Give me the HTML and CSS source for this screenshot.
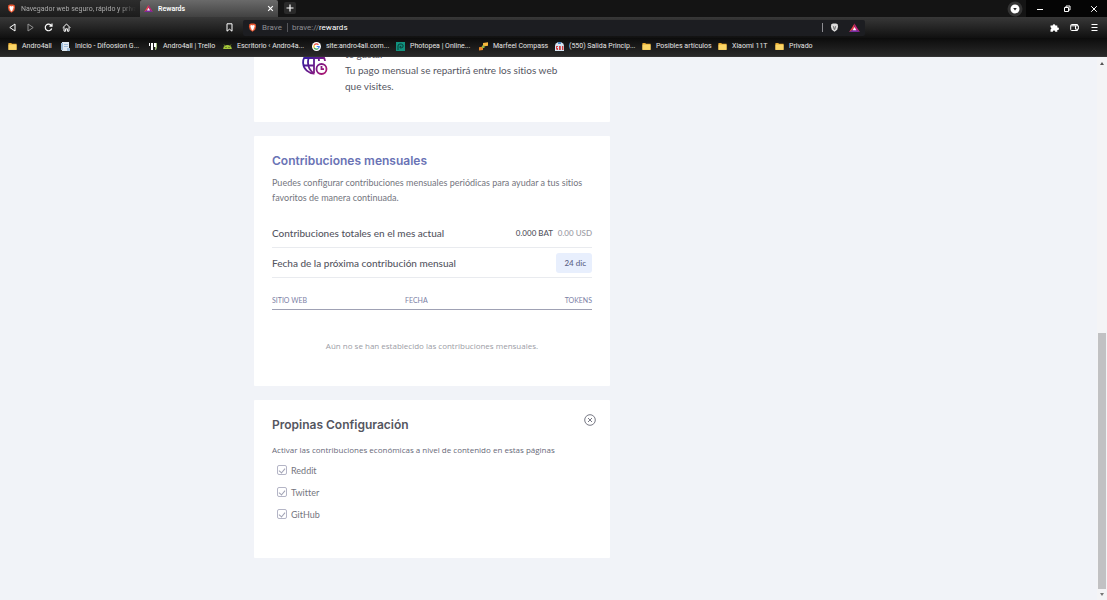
FILE: index.html
```html
<!DOCTYPE html>
<html lang="es">
<head>
<meta charset="utf-8">
<title>Rewards</title>
<link rel="stylesheet" href="styles.css">
</head>
<body>
<svg class="defs" width="0" height="0" aria-hidden="true">
  <defs>
    <linearGradient id="warm" gradientUnits="userSpaceOnUse" x1="2" y1="2" x2="26" y2="24"><stop offset="0.2" stop-color="#3b1c9c"/><stop offset="1" stop-color="#b5176f"/></linearGradient>
    <symbol id="lion" viewBox="0 0 10 10"><path fill="#e8552f" d="M3 .5h4l1 1 .9.2-.2 1.400.3.800-1 3.500L5 9.800 2 7.400 1 3.900l.3-.8-.2-1.400.9-.2z"/><path fill="#fff" d="M5 2.800l1-.6 1.600.8-.7 2 .2.9-1.300.8.500.8L5 8.200l-1.300-.700.500-.8-1.300-.8.200-.9-.7-2L4 2.200z"/></symbol>
    <symbol id="bat" viewBox="0 0 12 11"><path fill="#e4454a" d="M6 .5L3 5.500 0 10l6-3z"/><path fill="#c21f7b" d="M6 .5l3 5 3 4.500-6-3z"/><path fill="#7a2a9c" d="M0 10l6-4 6 4z"/><path fill="#fff" d="M6 4.500L8 8H4z"/></symbol>
    <symbol id="folder" viewBox="0 0 10 8"><path fill="#e9a92e" d="M.5 0h3l1 1h5v6.500H.5z"/><path fill="#fbd667" d="M.5 1.800h9v6H.5z"/></symbol>
  </defs>
</svg>
<header class="browser">
  <div class="tabs">
    <button class="tab"><svg class="i9"><use href="#lion"/></svg><span class="tab-title">Navegador web seguro, rápido y priva</span></button>
    <button class="tab tab-active"><svg class="i9"><use href="#bat"/></svg><span class="tab-title">Rewards</span><svg class="i6" viewBox="0 0 6 6"><path class="thin" d="M1 1l4 4M5 1L1 5"/></svg></button>
    <button class="new-tab" aria-label="Nueva pestaña"><svg class="i8" viewBox="0 0 8 8"><path class="line" d="M4 .5v7M.5 4h7"/></svg></button>
    <span class="spacer"></span>
    <button class="profile" aria-label="Perfil"><svg viewBox="0 0 16 16"><circle cx="8" cy="8" r="7.500" fill="#333"/><circle cx="8" cy="8" r="4.500" fill="#fff"/><path d="M6.200 7h3.600L8 9.400z" fill="#222"/></svg></button>
    <button class="win" aria-label="Minimizar"><svg class="i8" viewBox="0 0 8 8"><path class="thin" d="M1 4.500h6"/></svg></button>
    <button class="win" aria-label="Restaurar"><svg class="i8" viewBox="0 0 8 8"><path class="thin" d="M1.500 2.500h4v4h-4zM3 2.500V1h4v4H5.500"/></svg></button>
    <button class="win" aria-label="Cerrar"><svg class="i8" viewBox="0 0 8 8"><path class="thin" d="M1.200 1.200l5.600 5.600M6.800 1.200L1.200 6.800"/></svg></button>
  </div>
  <div class="toolbar">
    <div class="nav">
      <button class="tool" aria-label="Atrás"><svg class="i9" viewBox="0 0 9 9"><path class="thin" d="M7 1v7L1.800 4.500z"/></svg></button>
      <button class="tool dim" aria-label="Adelante"><svg class="i9" viewBox="0 0 9 9"><path class="thin" d="M2 1v7l5.200-3.500z"/></svg></button>
      <button class="tool" aria-label="Recargar"><svg class="i9" viewBox="0 0 9 9"><path class="line" d="M7.300 2.600A3.300 3.300 0 1 0 7.700 5.500M8 .6v2.600H5.400"/></svg></button>
      <button class="tool" aria-label="Inicio"><svg class="i9" viewBox="0 0 9 9"><path class="thin" d="M.7 4.800L4.500 1l3.800 3.800M2 4.200v4h1.600V5.800h1.800v2.400H7v-4"/></svg></button>
    </div>
    <button class="tool mark" aria-label="Marcador"><svg class="i9" viewBox="0 0 9 9"><path class="thin" d="M2 .8h5v7.400L4.500 6.200 2 8.200z"/></svg></button>
    <div class="address">
      <svg class="i9"><use href="#lion"/></svg>
      <span class="site">Brave</span>
      <label class="scheme" for="url">brave://</label>
      <input id="url" class="url" type="text" value="rewards">
      <button class="shield" aria-label="Escudos"><svg class="i9" viewBox="0 0 10 10"><path fill="#ddd" d="M3 .5h4l1 1 .9.2-.2 1.400.3.800-1 3.500L5 9.800 2 7.400 1 3.900l.3-.8-.2-1.400.9-.2z"/><path fill="#777" d="M3 3l1.500 1L5 6l.5-2L7 3 6 7 5 8 4 7z"/></svg></button>
      <button class="tool" aria-label="Rewards"><svg class="i11"><use href="#bat"/></svg></button>
    </div>
    <span class="spacer"></span>
    <div class="nav nav-end">
      <button class="tool" aria-label="Extensiones"><svg class="i9" viewBox="0 0 9 9"><path fill="#fff" d="M.5 2.500h2.200a1.300 1.300 0 1 1 2.600 0h2v2a1.300 1.300 0 1 1 0 2.500v1.800H5.200a1.200 1.200 0 0 0-2.400 0H.5V6.500a1.200 1.200 0 0 0 0-2.300z"/></svg></button>
      <button class="tool" aria-label="Cartera"><svg class="i9" viewBox="0 0 9 9"><path class="thin" d="M7.500 2.800V1.500H1.600Q.7 1.500.7 2.400v4.200q0 .9.900.9h5.900V6.200M.9 2.800h7.500v3.400H5.500V2.800"/></svg></button>
      <button class="tool" aria-label="Menú"><svg class="i9" viewBox="0 0 9 9"><path class="thin" d="M1.500 1.500h6M1.500 4.500h6M1.500 7.500h6"/></svg></button>
    </div>
  </div>
  <nav class="bookmarks">
    <a class="bm" href="#"><svg class="i9"><use href="#folder"/></svg>Andro4all</a>
    <a class="bm" href="#"><svg class="i9" viewBox="0 0 9 9"><path fill="#dfe8f2" d="M1 0h7v9H1z"/><path fill="#9dbbd8" d="M0 1h2v7H0zM3 2h4v1H3zM3 4h4v1H3zM6 6h3v3H6z"/></svg>Inicio - Difoosion G...</a>
    <a class="bm" href="#"><svg class="i9" viewBox="0 0 9 9"><path fill="#fff" d="M0 1h1v3H0zM2 1h2v7H2zM5 1h2v4H5z"/><path fill="#9fbb7a" d="M7 1h1v4.500L7 8H6V5h1z"/></svg>Andro4all | Trello</a>
    <a class="bm" href="#"><svg class="i9" viewBox="0 0 9 9"><path fill="#a4c639" d="M.2 7a4.300 4 0 0 1 8.600 0z"/><path stroke="#a4c639" stroke-width=".6" d="M2 4L1 2.500M7 4l1-1.500"/><path fill="#222" d="M2.500 5.200h1v.8h-1zM5.500 5.200h1v.8h-1z"/></svg>Escritorio ‹ Andro4a...</a>
    <a class="bm" href="#"><svg class="i9" viewBox="0 0 10 10"><circle cx="5" cy="5" r="5" fill="#fff"/><g fill="none" stroke-width="1.300"><path stroke="#ea4335" d="M2.500 3.600A3 3 0 0 1 7.200 3"/><path stroke="#fbbc05" d="M2.500 3.600a3 3 0 0 0 0 2.900"/><path stroke="#34a853" d="M2.500 6.500A3 3 0 0 0 7 7.200"/><path stroke="#4285f4" d="M7 7.200A3 3 0 0 0 8 5H5.200"/></g></svg>site:andro4all.com...</a>
    <a class="bm" href="#"><svg class="i9" viewBox="0 0 9 9"><path fill="#12927f" d="M0 0h9v9H0z"/><path fill="none" stroke="#073f39" d="M2 8V4a2 2 0 0 1 2-2h1.200a1.900 1.900 0 0 1 0 3.900H4V4.400h1.200"/></svg>Photopea | Online...</a>
    <a class="bm" href="#"><svg class="i9" viewBox="0 0 9 9"><path fill="#f6b73c" d="M4 1l5-.8v3.600l-5 .8z"/><path fill="#e88727" d="M0 5.200l4-.7v3.400l-4 .7z"/><path fill="#96b544" d="M3 3.500h2.500V6H3z"/></svg>Marfeel Compass</a>
    <a class="bm" href="#"><svg class="i9" viewBox="0 0 9 9"><path fill="#d7e5f3" d="M0 9V4a4.500 4 0 0 1 9 0v5z"/><path fill="#d54042" d="M1 4h2v1H2v1h1v2H1V7.400h1V7H1zM4 4h1.800v4H4zM7 4h1.400v4H7z"/><path fill="#4b87bf" d="M3 0h3v2H3z"/></svg>(550) Salida Princip...</a>
    <a class="bm" href="#"><svg class="i9"><use href="#folder"/></svg>Posibles artículos</a>
    <a class="bm" href="#"><svg class="i9"><use href="#folder"/></svg>Xiaomi 11T</a>
    <a class="bm" href="#"><svg class="i9"><use href="#folder"/></svg>Privado</a>
  </nav>
</header>
<div class="viewport">
  <main class="page">
    <div class="column">
      <section class="card intro">
        <svg class="globe" viewBox="0 0 26 26"><g fill="none" stroke="url(#warm)" stroke-width="1.800"><path d="M12.500 23.500A11 11 0 1 1 23 11"/><path d="M12 1.500C4 7 4 18 12 23.500M12 1.500V23M12 1.500c3 2.500 5 6 5 9.500M2 8h20M1.500 15.500h11"/><circle cx="19.500" cy="19" r="5"/><path d="M19.500 16v3.200H22"/></g></svg>
        <p class="intro-text">te gusta.<br>Tu pago mensual se repartirá entre los sitios web que visites.</p>
      </section>
      <section class="card monthly">
        <h2 class="title title-blue">Contribuciones mensuales</h2>
        <p class="lead">Puedes configurar contribuciones mensuales periódicas para ayudar a tus sitios favoritos de manera continuada.</p>
        <div class="row"><span>Contribuciones totales en el mes actual</span><span class="amount">0.000 BAT <span class="usd">0.00 USD</span></span></div>
        <div class="row"><span>Fecha de la próxima contribución mensual</span><span class="date">24 dic</span></div>
        <table class="sites">
          <thead><tr><th>SITIO WEB</th><th>FECHA</th><th class="right">TOKENS</th></tr></thead>
          <tbody><tr><td colspan="3">Aún no se han establecido las contribuciones mensuales.</td></tr></tbody>
        </table>
      </section>
      <section class="card tips">
        <div class="tips-head">
          <h2 class="title">Propinas Configuración</h2>
          <button class="close" aria-label="Cerrar"><svg viewBox="0 0 12 12"><circle cx="6" cy="6" r="5.300"/><path d="M4 4l4 4M8 4L4 8"/></svg></button>
        </div>
        <p class="tips-lead">Activar las contribuciones económicas a nivel de contenido en estas páginas</p>
        <label class="check"><input type="checkbox" checked>Reddit</label>
        <label class="check"><input type="checkbox" checked>Twitter</label>
        <label class="check"><input type="checkbox" checked>GitHub</label>
      </section>
    </div>
  </main>
  <div class="scrollbar"><span class="arrow up"></span><span class="track"></span><span class="thumb"></span><span class="arrow down"></span></div>
</div>
</body>
</html>
```
FILE: styles.css
```css
* { box-sizing: border-box; }
body { margin: 0; height: 100vh; display: flex; flex-direction: column; font-family: Lato, "Open Sans", sans-serif; font-variant-ligatures: none; background: #f1f3f8; color: #55565f; overflow: hidden; }
button { margin: 0; padding: 0; border: 0; background: none; font: inherit; color: inherit; display: flex; align-items: center; }
svg { display: block; flex: none; }
h2, p { margin: 0; }
.defs { position: absolute; }
.line, .thin { fill: none; stroke: #fff; stroke-width: 1.2; }
.thin { stroke-width: 1; }
.spacer { flex: 1; }
.i6 { width: 7px; height: 7px; }
.i8 { width: 8px; height: 8px; }
.i9 { width: 9px; height: 9px; }
.i11 { width: 11px; height: 10px; }

.browser { font-family: Roboto, sans-serif; font-size: 7px; color: #e6e6e6; flex: none; }
.tabs { height: 17px; display: flex; background: #141414; }
.tab { width: 140px; padding: 0 4px 0 7px; gap: 5px; background: linear-gradient(#2c2c2c, #1c1c1c); color: #aaa; }
.tab-title { flex: 1; overflow: hidden; white-space: nowrap; text-align: left; }
.tab:first-child .tab-title { -webkit-mask-image: linear-gradient(90deg, #000 85%, transparent); }
.tab-active { width: 138px; padding-left: 4px; background: linear-gradient(#6a6a6a, #424242); color: #fff; font-weight: 600; border-radius: 2px 2px 0 0; }
.new-tab { width: 12px; height: 12px; margin: 2px 0 0 6px; justify-content: center; background: #2a2a2a; border-radius: 2px; }
.profile { width: 16px; margin-right: 3px; }
.profile svg { width: 16px; height: 16px; }
.win { width: 27px; background: #050505; justify-content: center; }
.toolbar { height: 21px; display: flex; align-items: center; background: linear-gradient(#383838, #101010); padding: 0 8px; }
.nav { display: flex; gap: 9px; }
.nav-end { gap: 11px; }
.tool { height: 15px; }
.dim { opacity: .5; }
.mark { margin-left: 154px; margin-right: 9px; }
.address { flex: 0 1 622px; height: 16px; padding: 0 5px; display: flex; align-items: center; background: #1c1d21; color: #8d8d92; border-radius: 2px; font-size: 8px; }
.site { padding: 0 5px; margin-right: 4px; border-right: 1px solid #55565b; }
.url { flex: 1; min-width: 0; border: 0; padding: 0; background: none; font: inherit; color: #fff; outline: 0; }
.shield { padding: 0 10px 0 7px; border-left: 1px solid #8d8d92; }
.bookmarks { height: 19px; padding: 0 8px 2px; display: grid; grid-template-columns: 53px 88px 74px 89px 84px 83px 76px 87px 76px 57px auto; align-items: center; background: linear-gradient(#0c0c0c, #292929); border-bottom: 1px solid #333; }
.bm { display: flex; align-items: center; gap: 5px; color: #e6e6e6; text-decoration: none; white-space: nowrap; }

.viewport { flex: 1; min-height: 0; display: flex; }
.page { flex: 1; display: flex; flex-direction: column; justify-content: flex-end; overflow: hidden; padding-bottom: 42px; }
.column { width: 100%; max-width: 589px; margin: 0 auto; padding-right: 233px; display: flex; flex-direction: column; gap: 14px; }
.card { background: #fff; padding: 18px; border-radius: 1px; }
.intro { display: flex; gap: 17px; padding: 0 36px 28px 48px; }
.globe { width: 26px; height: 26px; margin-top: 4px; }
.intro-text { font-size: 10px; line-height: 16px; }
.title { font-family: Inter, sans-serif; font-size: 12px; line-height: 14px; font-weight: 600; color: #55565f; }
.title-blue { color: #6a73b5; }
.lead { margin: 7px 0 13px; font-size: 9px; line-height: 15px; color: #74757e; }
.row { height: 30px; display: flex; justify-content: space-between; align-items: center; border-bottom: 1px solid #e9ebef; font-size: 10px; font-weight: 500; }
.amount { font-size: 8px; }
.usd { color: #9b9ca5; padding-left: 3px; }
.date { padding: 4px 6px 4px 8px; background: #e8effd; border-radius: 3px; font-size: 8px; line-height: 12px; color: #5c6286; }
.sites { width: 100%; margin-top: 13px; border-collapse: collapse; table-layout: fixed; font-size: 7px; color: #7c80a5; }
.sites th { font-weight: 400; text-align: left; padding: 0; height: 18px; border-bottom: 1px solid #9fa1b4; }
.sites th:nth-child(1) { width: 133px; }
.sites .right { text-align: right; }
.sites td { padding: 0; height: 72px; text-align: center; font-family: "Open Sans", sans-serif; font-size: 8px; color: #9b9ca5; }
.monthly { padding-bottom: 5px; }
.tips { padding-top: 14px; padding-bottom: 33px; }
.tips-head { display: flex; justify-content: space-between; margin-right: -4px; }
.tips-head .title { margin-top: 4px; }
.close { align-self: flex-start; }
.close svg { width: 12px; height: 12px; fill: none; stroke: #777884; stroke-width: 1; }
.tips-lead { margin: 11px 0 2px; font-family: "Open Sans", sans-serif; font-size: 8px; line-height: 14px; color: #686978; }
.check { display: flex; align-items: center; gap: 4px; height: 22px; padding-left: 5px; font-size: 9px; color: #74757e; }
.check input { appearance: none; width: 10px; height: 10px; margin: 0; border: 1px solid #b4b5c6; border-radius: 2px; display: grid; place-items: center; }
.check input::after { content: ""; width: 3px; height: 5px; border: solid #a0a2b4; border-width: 0 1px 1px 0; transform: rotate(40deg); }

.scrollbar { width: 10px; display: flex; flex-direction: column; align-items: center; background: #f4f4f6; padding: 5px 1px 4px 1px; }
.track { flex: 268; }
.thumb { flex: 256; width: 100%; background: #c1c1c3; }
.arrow { border: 2px solid transparent; }
.up { border-top: 0; border-bottom: 3px solid #555; }
.down { border-bottom: 0; border-top: 3px solid #777; margin-top: 4px; }
```
